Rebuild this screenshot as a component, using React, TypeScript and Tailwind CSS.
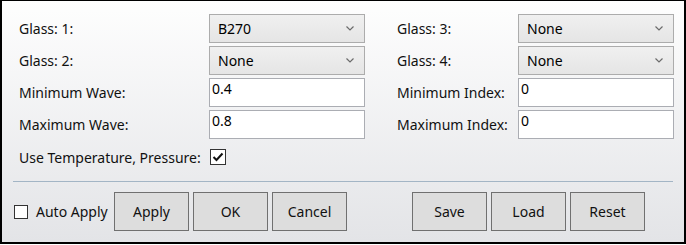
import React from 'react';

const font = { fontFamily: '"Noto Sans", "Open Sans", sans-serif' };

const Chevron: React.FC = () => (
  <svg width="8" height="5" viewBox="0 0 8 5" className="shrink-0">
    <polyline points="0.5,0.5 4,4 7.5,0.5" fill="none" stroke="#6b6b6b" strokeWidth="1.2" />
  </svg>
);

const Combo: React.FC<{ value: string }> = ({ value }) => (
  <div className="flex h-[29px] w-[156px] items-center justify-between border border-[#acacac] bg-linear-to-b from-[#f0f0f0] to-[#e5e5e5] pl-[8px] pr-[10px] text-[14px] text-black">
    <span>{value}</span>
    <Chevron />
  </div>
);

const Field: React.FC<{ value: string }> = ({ value }) => (
  <div className="h-[29px] w-[156px] border border-[#abadb3] bg-white pl-[2px] text-[14px] leading-[20px] text-black">
    {value}
  </div>
);

const Label: React.FC<{ text: string }> = ({ text }) => (
  <div className="flex h-[29px] items-center text-[14px] text-[#111]">{text}</div>
);

const Button: React.FC<{ text: string; className?: string }> = ({ text, className = '' }) => (
  <button className={`h-[39px] w-[75px] border border-[#707070] bg-[#dddddd] text-[14px] text-[#111] ${className}`}>
    {text}
  </button>
);

const App: React.FC = () => {
  return (
    <div style={font} className="h-[245px] w-[686px] bg-white">
      <div className="h-[244px] w-[686px] border-t border-x-2 border-b-2 border-black bg-linear-to-b from-[#fefefe] to-[#e3e4e7] pl-[11px]">
        <div className="ml-[6px] mt-[13px] grid grid-cols-[190px_156px_32px_121px_156px] gap-y-[3px]">
          <Label text="Glass: 1:" />
          <Combo value="B270" />
          <div />
          <Label text="Glass: 3:" />
          <Combo value="None" />

          <Label text="Glass: 2:" />
          <Combo value="None" />
          <div />
          <Label text="Glass: 4:" />
          <Combo value="None" />

          <Label text="Minimum Wave:" />
          <Field value="0.4" />
          <div />
          <Label text="Minimum Index:" />
          <Field value="0" />

          <Label text="Maximum Wave:" />
          <Field value="0.8" />
          <div />
          <Label text="Maximum Index:" />
          <Field value="0" />
        </div>

        <div className="ml-[6px] mt-[10px] flex h-[16px] items-center">
          <span className="w-[191px] text-[14px] text-[#111]">Use Temperature, Pressure:</span>
          <div className="flex h-[16px] w-[16px] items-center justify-center border border-[#333] bg-white">
            <svg width="12" height="10" viewBox="0 0 12 10">
              <polyline points="1.5,5 4.5,8 10.5,1.5" fill="none" stroke="#111" strokeWidth="2" />
            </svg>
          </div>
        </div>

        <div className="mt-[16px] h-px w-[660px] bg-[#a3b5c5]" />

        <div className="mt-[10px] flex items-center">
          <div className="ml-[1px] flex w-[100px] items-center">
            <div className="h-[14px] w-[14px] border border-[#333] bg-white" />
            <span className="ml-[8px] text-[14px] text-[#111]">Auto Apply</span>
          </div>
          <Button text="Apply" />
          <Button text="OK" className="ml-[4px]" />
          <Button text="Cancel" className="ml-[4px]" />
          <Button text="Save" className="ml-[65px]" />
          <Button text="Load" className="ml-[4px]" />
          <Button text="Reset" className="ml-[4px]" />
        </div>
      </div>
    </div>
  );
};

export default App;
